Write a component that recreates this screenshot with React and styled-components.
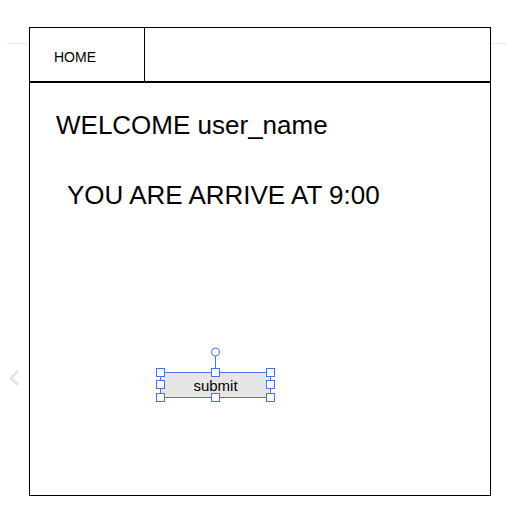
import React from 'react'
import styled, { createGlobalStyle } from 'styled-components';

const GlobalStyle = createGlobalStyle`
    body {
        margin: 0;
        background: #fff;
        font-family: "Liberation Sans", Arial, sans-serif;
    }
`;

const Canvas = styled.div`
    position: relative;
    width: 512px;
    height: 511px;
    padding: 27px 0 0 29px;
    box-sizing: border-box;
`;

const Guide = styled.div`
    position: absolute;
    top: 43px;
    left: ${props => props.left}px;
    width: ${props => props.width}px;
    border-top: 1px dashed #e4e4e4;
`;

const Chevron = styled.svg`
    position: absolute;
    left: 7px;
    top: 369px;
`;

const Frame = styled.div`
    width: 462px;
    height: 469px;
    border: 1px solid #000;
    box-sizing: border-box;
    display: flex;
    flex-direction: column;
`;

const Header = styled.div`
    display: flex;
    height: 55px;
    border-bottom: 2px solid #000;
    box-sizing: border-box;
`;

const Tab = styled.div`
    width: 115px;
    border-right: 1px solid #000;
    display: flex;
    align-items: center;
    padding: 4px 0 0 24px;
    box-sizing: border-box;
    font-size: 14px;
    color: #000;
`;

const Content = styled.div`
    padding: 27px 0 0 26px;
    display: flex;
    flex-direction: column;
    align-items: flex-start;
`;

const Heading = styled.div`
    font-size: 26px;
    color: #000;
    margin-left: ${props => props.indent || 0}px;
    margin-top: ${props => props.gap || 0}px;
`;

const ButtonWrap = styled.div`
    position: relative;
    margin: 161px 0 0 104px;
`;

const SubmitButton = styled.button`
    width: 111px;
    height: 26px;
    background: #e6e6e6;
    border: 1px solid #4a72e0;
    box-sizing: border-box;
    font-family: "Liberation Sans", Arial, sans-serif;
    font-size: 15px;
    color: #000;
    padding: 0;
    display: block;
`;

const Handle = styled.span`
    position: absolute;
    left: ${props => props.x - 4}px;
    top: ${props => props.y - 4}px;
    width: 7px;
    height: 7px;
    background: #fff;
    border: 1px solid #4a72e0;
`;

const Rotator = styled.svg`
    position: absolute;
    left: 50px;
    top: -25px;
`;

const handles = [
    [0, 0], [55, 0], [110, 0],
    [0, 12], [110, 12],
    [0, 25], [55, 25], [110, 25],
];

function App() {
    return (
        <Canvas>
            <GlobalStyle />
            <Guide left={7} width={21} />
            <Guide left={491} width={16} />
            <Chevron width="14" height="18" viewBox="0 0 14 18">
                <path d="M11 2 L4 9 L11 16" fill="none" stroke="#e2e2e2" strokeWidth="2.5" />
            </Chevron>
            <Frame>
                <Header>
                    <Tab>HOME</Tab>
                </Header>
                <Content>
                    <Heading>WELCOME user_name</Heading>
                    <Heading indent={11} gap={39}>YOU ARE ARRIVE AT 9:00</Heading>
                    <ButtonWrap>
                        <SubmitButton>submit</SubmitButton>
                        <Rotator width="11" height="26" viewBox="0 0 11 26">
                            <circle cx="5.5" cy="5" r="4" fill="#fff" stroke="#4a72e0" strokeWidth="1" />
                            <line x1="5.5" y1="9" x2="5.5" y2="22" stroke="#4a72e0" strokeWidth="1" />
                        </Rotator>
                        {handles.map(([x, y]) => (
                            <Handle key={`${x}-${y}`} x={x} y={y} />
                        ))}
                    </ButtonWrap>
                </Content>
            </Frame>
        </Canvas>
    )
}

export default App;
